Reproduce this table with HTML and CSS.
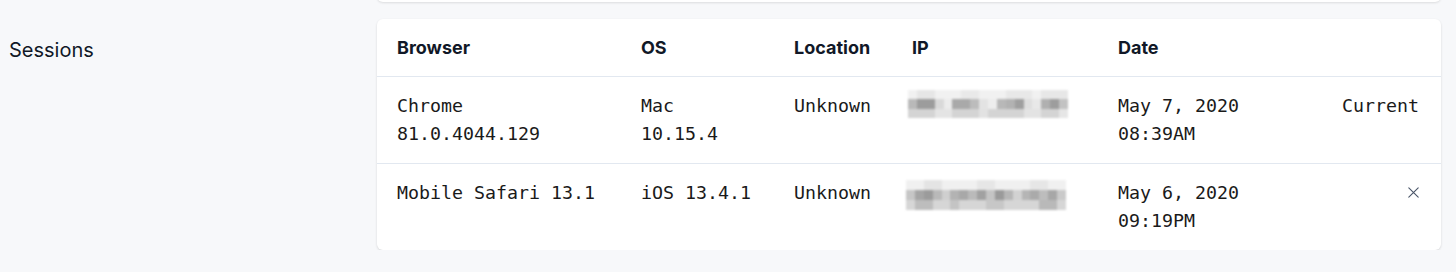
FILE: index.html
```html
<!DOCTYPE html>
<html lang="en">
<head>
<meta charset="utf-8">
<title>Sessions</title>
<link rel="stylesheet" href="styles.css">
</head>
<body>
<div class="page">
  <div class="prev-row">
    <div class="prev-spacer"></div>
    <div class="prev-card"></div>
  </div>
  <section class="section">
    <h2 class="section-label">Sessions</h2>
    <div class="card">
      <table class="sessions">
        <colgroup>
          <col class="c-browser"><col class="c-os"><col class="c-loc"><col class="c-ip"><col class="c-date"><col class="c-act">
        </colgroup>
        <thead>
          <tr>
            <th class="first">Browser</th>
            <th>OS</th>
            <th>Location</th>
            <th>IP</th>
            <th>Date</th>
            <th class="last"></th>
          </tr>
        </thead>
        <tbody>
          <tr>
            <td class="first">Chrome<br>81.0.4044.129</td>
            <td>Mac<br>10.15.4</td>
            <td>Unknown</td>
            <td>
              <svg class="ip-blur" width="160" height="28" viewBox="0 0 18 3" preserveAspectRatio="none" shape-rendering="crispEdges" aria-hidden="true">
                <rect x="0" y="0" width="18" height="1" fill="#f1f1f1"/>
                <rect x="1" y="0" width="2" height="1" fill="#e6e6e6"/>
                <rect x="6" y="0" width="2" height="1" fill="#e9e9e9"/>
                <rect x="11" y="0" width="3" height="1" fill="#e8e8e8"/>
                <rect x="15" y="0" width="3" height="1" fill="#e7e7e7"/>
                <rect x="0" y="1" width="1" height="1" fill="#b9b9b9"/>
                <rect x="1" y="1" width="2" height="1" fill="#9c9c9c"/>
                <rect x="3" y="1" width="1" height="1" fill="#d9d9d9"/>
                <rect x="4" y="1" width="1" height="1" fill="#ececec"/>
                <rect x="5" y="1" width="2" height="1" fill="#a9a9a9"/>
                <rect x="7" y="1" width="1" height="1" fill="#bcbcbc"/>
                <rect x="8" y="1" width="1" height="1" fill="#e3e3e3"/>
                <rect x="9" y="1" width="1" height="1" fill="#ededed"/>
                <rect x="10" y="1" width="1" height="1" fill="#b8b8b8"/>
                <rect x="11" y="1" width="1" height="1" fill="#b2b2b2"/>
                <rect x="12" y="1" width="1" height="1" fill="#9f9f9f"/>
                <rect x="13" y="1" width="1" height="1" fill="#dedede"/>
                <rect x="14" y="1" width="1" height="1" fill="#e8e8e8"/>
                <rect x="15" y="1" width="1" height="1" fill="#b0b0b0"/>
                <rect x="16" y="1" width="1" height="1" fill="#9d9d9d"/>
                <rect x="17" y="1" width="1" height="1" fill="#c2c2c2"/>
                <rect x="0" y="2" width="18" height="1" fill="#d4d4d4"/>
                <rect x="3" y="2" width="2" height="1" fill="#e4e4e4"/>
                <rect x="8" y="2" width="1" height="1" fill="#e2e2e2"/>
                <rect x="13" y="2" width="2" height="1" fill="#e3e3e3"/>
                <rect x="17" y="2" width="1" height="1" fill="#e6e6e6"/>
              </svg>
            </td>
            <td>May 7, 2020<br>08:39AM</td>
            <td class="last">Current</td>
          </tr>
          <tr>
            <td class="first">Mobile Safari 13.1</td>
            <td>iOS 13.4.1</td>
            <td>Unknown</td>
            <td>
              <svg class="ip-blur ip-blur-2" width="160" height="30" viewBox="0 0 18 3" preserveAspectRatio="none" shape-rendering="crispEdges" aria-hidden="true">
                <rect x="0" y="0" width="18" height="1" fill="#f0f0f0"/>
                <rect x="2" y="0" width="2" height="1" fill="#e4e4e4"/>
                <rect x="8" y="0" width="2" height="1" fill="#e6e6e6"/>
                <rect x="14" y="0" width="2" height="1" fill="#e6e6e6"/>
                <rect x="0" y="1" width="1" height="1" fill="#c6c6c6"/>
                <rect x="1" y="1" width="1" height="1" fill="#a5a5a5"/>
                <rect x="2" y="1" width="1" height="1" fill="#9b9b9b"/>
                <rect x="3" y="1" width="1" height="1" fill="#b9b9b9"/>
                <rect x="4" y="1" width="1" height="1" fill="#cfcfcf"/>
                <rect x="5" y="1" width="1" height="1" fill="#b3b3b3"/>
                <rect x="6" y="1" width="1" height="1" fill="#a8a8a8"/>
                <rect x="7" y="1" width="1" height="1" fill="#bababa"/>
                <rect x="8" y="1" width="1" height="1" fill="#a1a1a1"/>
                <rect x="9" y="1" width="1" height="1" fill="#c4c4c4"/>
                <rect x="10" y="1" width="1" height="1" fill="#9a9a9a"/>
                <rect x="11" y="1" width="1" height="1" fill="#b6b6b6"/>
                <rect x="12" y="1" width="1" height="1" fill="#d2d2d2"/>
                <rect x="13" y="1" width="1" height="1" fill="#b5b5b5"/>
                <rect x="14" y="1" width="1" height="1" fill="#aaaaaa"/>
                <rect x="15" y="1" width="1" height="1" fill="#bdbdbd"/>
                <rect x="16" y="1" width="1" height="1" fill="#a7a7a7"/>
                <rect x="17" y="1" width="1" height="1" fill="#cacaca"/>
                <rect x="0" y="2" width="18" height="1" fill="#d6d6d6"/>
                <rect x="1" y="2" width="2" height="1" fill="#bdbdbd"/>
                <rect x="5" y="2" width="1" height="1" fill="#c4c4c4"/>
                <rect x="9" y="2" width="2" height="1" fill="#c7c7c7"/>
                <rect x="15" y="2" width="2" height="1" fill="#b9b9b9"/>
              </svg>
            </td>
            <td>May 6, 2020<br>09:19PM</td>
            <td class="last">
              <svg class="close-icon" width="11" height="11" viewBox="0 0 11 11" aria-label="Remove session">
                <path d="M0.8 0.8 L10.2 10.2 M10.2 0.8 L0.8 10.2" stroke="#4a5568" stroke-width="1.1" stroke-linecap="round" fill="none"/>
              </svg>
            </td>
          </tr>
        </tbody>
      </table>
    </div>
  </section>
</div>
</body>
</html>
```

FILE: styles.css
```css
* { box-sizing: border-box; }

html, body {
  margin: 0;
  padding: 0;
  background: #f7f8fa;
}

body {
  font-family: Inter, "Noto Sans", "Liberation Sans", sans-serif;
  color: #1a202c;
  overflow: hidden;
}

.page {
  display: flex;
  flex-direction: column;
  padding-right: 15px;
}

.prev-row {
  display: flex;
  margin-top: -20px;
  height: 22px;
}

.prev-spacer {
  width: 377px;
  flex: none;
}

.prev-card {
  flex: 1;
  background: #fff;
  border-radius: 0 0 6px 6px;
  box-shadow: 0 1px 3px rgba(0, 0, 0, 0.08), 0 1px 2px rgba(0, 0, 0, 0.04);
}

.section {
  display: flex;
  margin-top: 17px;
}

.section-label {
  width: 377px;
  flex: none;
  margin: 0;
  padding: 17px 0 0 9px;
  font-size: 20px;
  line-height: 28px;
  font-weight: 400;
  color: #111827;
}

.card {
  flex: 1;
  background: #fff;
  border-radius: 6px;
  box-shadow: 0 1px 3px rgba(0, 0, 0, 0.09), 0 1px 2px rgba(0, 0, 0, 0.05);
  overflow: hidden;
}

.sessions {
  width: 100%;
  border-collapse: collapse;
  table-layout: fixed;
}

.c-browser { width: 264px; }
.c-os { width: 153px; }
.c-loc { width: 118px; }
.c-ip { width: 206px; }
.c-date { width: auto; }
.c-act { width: 130px; }

.sessions th {
  text-align: left;
  font-weight: 700;
  font-size: 18px;
  line-height: 25px;
  padding: 16px 0;
  color: #111827;
}

.sessions td {
  font-family: "DejaVu Sans Mono", "Liberation Mono", monospace;
  font-size: 18.3px;
  line-height: 28px;
  padding: 15px 0;
  vertical-align: top;
  color: #1a1a1a;
  border-top: 1px solid #e2e8f0;
}

.sessions .first { padding-left: 20px; }
.sessions .last { padding-right: 22px; text-align: right; }

.ip-blur {
  display: block;
  margin-top: -2px;
  margin-left: -4px;
  filter: blur(0.8px);
}

.ip-blur-2 {
  margin-top: 1px;
  margin-left: -6px;
}

.close-icon {
  display: inline-block;
  vertical-align: middle;
  margin-top: -4px;
}
```
